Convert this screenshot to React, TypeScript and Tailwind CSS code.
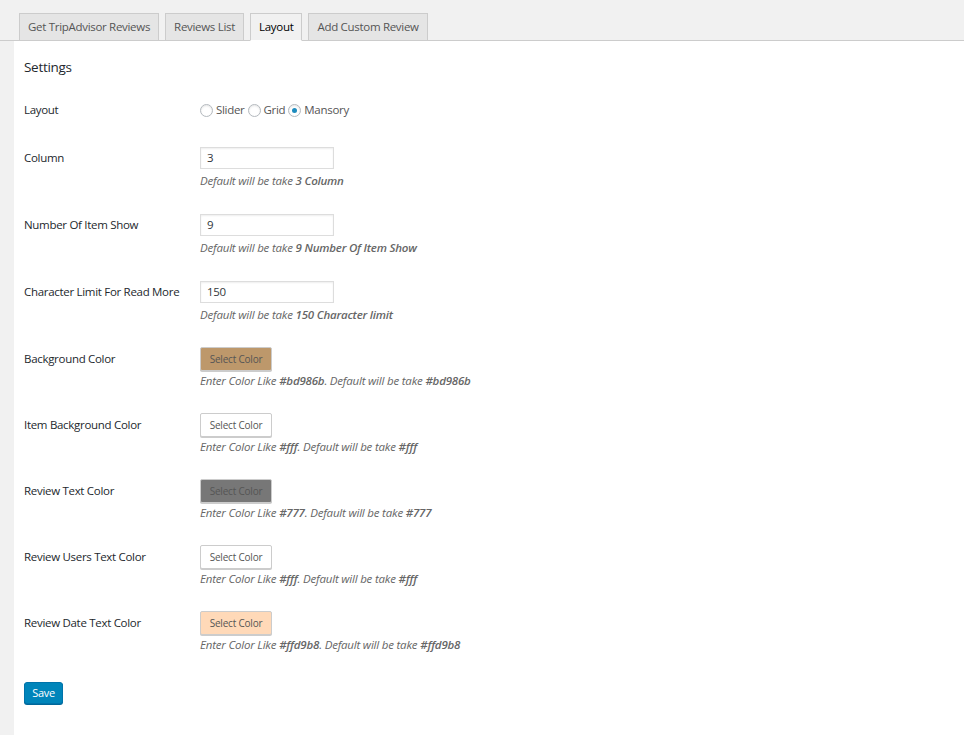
import React from "react";

const font = { fontFamily: '"Open Sans", "Noto Sans", Arial, sans-serif' };

function Radio({ checked, label }: { checked?: boolean; label: string }) {
  return (
    <label className="flex items-center">
      <span className="w-[13px] h-[13px] rounded-full border border-[#b4b9be] bg-white shadow-[inset_0_1px_2px_rgba(0,0,0,0.1)] flex items-center justify-center mr-[3px]">
        {checked && <span className="w-[5px] h-[5px] rounded-full bg-[#1e8cbe]" />}
      </span>
      <span className="mr-[3px]">{label}</span>
    </label>
  );
}

function InputRow({ label, value, pre, bold, mt }: { label: string; value: string; pre: string; bold: string; mt: string }) {
  return (
    <div className={`flex ${mt}`}>
      <div className="w-[176px] h-[22px] flex items-center text-[#23282d]">{label}</div>
      <div className="flex flex-col">
        <div className="w-[134px] h-[22px] border border-[#ddd] bg-white shadow-[inset_0_1px_2px_rgba(0,0,0,0.07)] px-[6px] flex items-center text-[#32373c] text-[11.5px]">{value}</div>
        <div className="mt-[3px] h-[18px] leading-[18px] italic text-[#666] text-[11.5px] tracking-[-0.2px]">
          {pre}
          <span className="font-semibold">{bold}</span>
        </div>
      </div>
    </div>
  );
}

function ColorRow({ label, bg, text, c }: { label: string; bg: string; text: string; c: string }) {
  return (
    <div className="flex mt-[23px]">
      <div className="w-[176px] h-[24px] flex items-center text-[#23282d]">{label}</div>
      <div className="flex flex-col">
        <div className={`w-[72px] h-[24px] border border-[#ccc] ${bg} ${text} rounded-[2px] flex items-center justify-center text-[10px] tracking-[-0.2px] shadow-[0_1px_0_#ccc]`}>Select Color</div>
        <div className="mt-[1px] h-[18px] leading-[18px] italic text-[#666] text-[11.5px] tracking-[-0.2px]">
          Enter Color Like <span className="font-semibold">{c}</span>. Default will be take <span className="font-semibold">{c}</span>
        </div>
      </div>
    </div>
  );
}

export default function App() {
  const tabs = ["Get TripAdvisor Reviews", "Reviews List", "Layout", "Add Custom Review"];
  return (
    <div style={font} className="w-[964px] h-[735px] bg-[#f1f1f1] text-[11.5px] tracking-[-0.3px] overflow-hidden flex flex-col">
      <div className="h-[41px] flex items-end pl-[19px] border-b border-[#ccc] relative">
        {tabs.map((t) => {
          const active = t === "Layout";
          return (
            <div
              key={t}
              className={`h-[28px] mr-[6px] px-[8px] flex items-center border border-[#ccc] -mb-px font-medium text-[11.5px] ${
                active ? "bg-[#f1f1f1] text-[#000] border-b-[#fff]" : "bg-[#e5e5e5] text-[#555]"
              }`}
            >
              {t}
            </div>
          );
        })}
      </div>
      <div className="flex-1 ml-[14px] bg-white pl-[10px] pt-[16px]">
        <div className="h-[20px] leading-[20px] text-[13.5px] font-medium text-[#23282d]">Settings</div>
        <div className="flex mt-[23px] h-[20px] items-center">
          <div className="w-[176px] text-[#23282d]">Layout</div>
          <div className="flex items-center text-[#555]">
            <Radio label="Slider" />
            <Radio label="Grid" />
            <Radio label="Mansory" checked />
          </div>
        </div>
        <InputRow mt="mt-[27px]" label="Column" value="3" pre="Default will be take " bold="3 Column" />
        <InputRow mt="mt-[24px]" label="Number Of Item Show" value="9" pre="Default will be take " bold="9 Number Of Item Show" />
        <InputRow mt="mt-[24px]" label="Character Limit For Read More" value="150" pre="Default will be take " bold="150 Character limit" />
        <ColorRow label="Background Color" bg="bg-[#bd986b]" text="text-[#555]" c="#bd986b" />
        <ColorRow label="Item Background Color" bg="bg-white" text="text-[#555]" c="#fff" />
        <ColorRow label="Review Text Color" bg="bg-[#777]" text="text-[#555]" c="#777" />
        <ColorRow label="Review Users Text Color" bg="bg-white" text="text-[#555]" c="#fff" />
        <ColorRow label="Review Date Text Color" bg="bg-[#ffd9b8]" text="text-[#555]" c="#ffd9b8" />
        <div className="mt-[28px]">
          <div className="w-[39px] h-[22px] bg-[#0085ba] border border-[#0073aa] rounded-[3px] shadow-[0_1px_0_#006799] text-white text-[11px] flex items-center justify-center">Save</div>
        </div>
      </div>
    </div>
  );
}
